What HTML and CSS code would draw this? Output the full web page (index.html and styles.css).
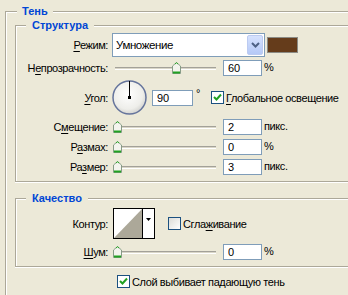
FILE: index.html
```html
<!DOCTYPE html>
<html lang="ru">

<head>
    <meta charset="UTF-8">
    <title>Тень</title>
    <link rel="stylesheet" href="styles.css">
</head>

<body>
    <fieldset class="group outer">
        <legend>Тень</legend>

        <fieldset class="group">
            <legend>Структура</legend>

            <div class="row row-mode">
                <label class="lbl"><u>Р</u>ежим:</label>
                <div class="select">
                    <span class="select-text">Умножение</span>
                    <span class="select-btn">
                        <svg width="9" height="6" viewBox="0 0 9 6">
                            <path d="M1 1 L4.5 4.5 L8 1" fill="none" stroke="#4d6185" stroke-width="2"/>
                        </svg>
                    </span>
                </div>
                <span class="swatch"></span>
            </div>

            <div class="row">
                <label class="lbl">Н<u>е</u>прозрачность:</label>
                <div class="slider">
                    <span class="track"></span>
                    <span class="thumb thumb-60"></span>
                </div>
                <input class="num" type="text" value="60">
                <span class="unit">%</span>
            </div>

            <div class="row row-angle">
                <label class="lbl"><u>У</u>гол:</label>
                <svg class="dial" width="35" height="35" viewBox="0 0 35 35">
                    <defs>
                        <radialGradient id="dialFill" cx="45%" cy="40%" r="60%">
                            <stop offset="0" stop-color="#ffffff"/>
                            <stop offset="0.75" stop-color="#eeeeea"/>
                            <stop offset="1" stop-color="#d4d4d0"/>
                        </radialGradient>
                    </defs>
                    <circle cx="17.5" cy="17.5" r="16.5" fill="url(#dialFill)" stroke="#65749c" stroke-width="1.5"/>
                    <line x1="17.5" y1="17.5" x2="17.5" y2="1" stroke="#000" stroke-width="1"/>
                    <rect x="16" y="16" width="3" height="3" fill="#000"/>
                </svg>
                <input class="num num-angle" type="text" value="90">
                <span class="deg">°</span>
                <span class="check checked"></span>
                <span class="check-text"><u>Г</u>лобальное освещение</span>
            </div>

            <div class="row">
                <label class="lbl">С<u>м</u>ещение:</label>
                <div class="slider">
                    <span class="track"></span>
                    <span class="thumb"></span>
                </div>
                <input class="num" type="text" value="2">
                <span class="unit">пикс.</span>
            </div>

            <div class="row">
                <label class="lbl">Р<u>а</u>змах:</label>
                <div class="slider">
                    <span class="track"></span>
                    <span class="thumb"></span>
                </div>
                <input class="num" type="text" value="0">
                <span class="unit">%</span>
            </div>

            <div class="row">
                <label class="lbl">Ра<u>з</u>мер:</label>
                <div class="slider">
                    <span class="track"></span>
                    <span class="thumb"></span>
                </div>
                <input class="num" type="text" value="3">
                <span class="unit">пикс.</span>
            </div>
        </fieldset>

        <fieldset class="group quality">
            <legend>Качество</legend>

            <div class="row row-contour">
                <label class="lbl">Контур:</label>
                <svg class="contour" width="42" height="31" viewBox="0 0 42 31">
                    <rect x="0.5" y="0.5" width="41" height="30" fill="#fff" stroke="#000"/>
                    <path d="M1 30 L29 1 L29 30 Z" fill="#aca899"/>
                    <line x1="29.5" y1="0" x2="29.5" y2="31" stroke="#000"/>
                    <path d="M33 10 L38 10 L35.5 13 Z" fill="#000"/>
                </svg>
                <span class="check check-smooth"></span>
                <span class="check-text">Сгла<u>ж</u>ивание</span>
            </div>

            <div class="row">
                <label class="lbl"><u>Ш</u>ум:</label>
                <div class="slider">
                    <span class="track"></span>
                    <span class="thumb"></span>
                </div>
                <input class="num" type="text" value="0">
                <span class="unit">%</span>
            </div>
        </fieldset>

        <div class="row row-knockout">
            <span class="check checked"></span>
            <span class="check-text">Слой выбивает падающую тень</span>
        </div>
    </fieldset>
</body>

</html>
```

FILE: styles.css
```css
* {
    box-sizing: border-box;
}

html,
body {
    margin: 0;
    width: 348px;
    height: 295px;
    overflow: hidden;
}

body {
    background: #ece9d8;
    font-family: 'Liberation Sans', Arial, sans-serif;
    font-size: 11px;
    letter-spacing: -0.4px;
    color: #000;
}

u {
    text-decoration: underline;
    text-underline-offset: 2px;
}

/* group boxes: the dialog is cut off on the right */
.group {
    margin: 0;
    padding: 0 0 6px 0;
    border: 1px solid #aca899;
    border-right: none;
    box-shadow: inset 1px 1px 0 #fff, 0 1px 0 #fff;
    min-width: 0;
}

.group legend {
    margin-left: 10px;
    padding: 0 6px;
    font-weight: bold;
    letter-spacing: 0;
    color: #0046d5;
    line-height: 14px;
    background: #ece9d8;
}

.outer {
    margin: 4px 0 0 5px;
    width: 343px;
    height: 291px;
    padding: 0 0 0 9px;
    border-bottom: none;
    box-shadow: inset 1px 1px 0 #fff;
}

.outer > legend {
    margin-left: 2px;
    padding: 0 5px;
}

.quality {
    margin-top: 9px;
}

/* rows */
.row {
    display: flex;
    align-items: center;
    height: 16px;
    margin-top: 4px;
}

.lbl {
    width: 92px;
    text-align: right;
    white-space: nowrap;
    margin-right: 4px;
}

.row-mode {
    height: 24px;
    margin-top: 1px;
}

.row-mode + .row {
    margin-top: 3px;
}

.row-angle {
    height: 35px;
}

.row-contour {
    height: 31px;
    margin-top: 3px;
}

.row-contour + .row {
    margin-top: 5px;
}

.row-knockout {
    height: 13px;
    margin-top: 8px;
    padding-left: 102px;
}

/* mode select */
.select {
    display: flex;
    align-items: center;
    width: 153px;
    height: 24px;
    border: 1px solid #7f9db9;
    background: #fff;
    padding: 1px;
}

.select-text {
    flex: 1;
    padding-left: 2px;
    font-size: 11.5px;
}

.select-btn {
    width: 16px;
    height: 100%;
    display: flex;
    align-items: center;
    justify-content: center;
    background: linear-gradient(#d6e2fe, #b5c9f7);
    border: 1px solid #bccbf1;
    border-radius: 2px;
}

.swatch {
    width: 31px;
    height: 16px;
    margin-left: 2px;
    border: 1px solid #8b8b85;
    background: #653c1b;
}

/* slider */
.slider {
    position: relative;
    width: 108px;
    height: 16px;
}

.track {
    position: absolute;
    left: 3px;
    right: 4px;
    top: 7px;
    height: 3px;
    background: #d9d6c8;
    border-top: 1px solid #a3a199;
    border-bottom: 1px solid #fff;
}

.thumb {
    position: absolute;
    top: 2px;
    left: 1px;
    width: 9px;
    height: 12px;
    background: url("data:image/svg+xml;utf8,<svg xmlns='http://www.w3.org/2000/svg' width='9' height='12'><path d='M0.5 4 L4.5 0.5 L8.5 4 V11.5 H0.5 Z' fill='%23f4f4ee' stroke='%23879c87'/><path d='M3 2 L4.5 0.8 L6 2' fill='none' stroke='%2326a626'/><rect x='1' y='9.5' width='7' height='2' fill='%2321a121'/></svg>") no-repeat;
}

.thumb-60 {
    left: 60px;
}

/* numeric fields */
.num {
    width: 39px;
    height: 16px;
    margin: 0 0 0 3px;
    padding: 0 0 0 4px;
    border: 1px solid #7f9db9;
    background: #fff;
    font-family: inherit;
    font-size: 11px;
    color: #000;
    outline: none;
}

.unit {
    margin-left: 2px;
    align-self: flex-start;
    line-height: 14px;
}

.dial {
    display: block;
}

.num-angle {
    width: 41px;
    margin-left: 5px;
}

.deg {
    align-self: flex-start;
    margin: 7px 0 0 3px;
    line-height: 12px;
}

/* checkboxes */
.check {
    width: 13px;
    height: 13px;
    border: 1px solid #1c5180;
    background: linear-gradient(135deg, #dcdcd7, #fff);
    flex: none;
}

.checked {
    background: #fff url("data:image/svg+xml;utf8,<svg xmlns='http://www.w3.org/2000/svg' width='11' height='11'><path d='M2 5 L4.5 7.5 L9 2.5' fill='none' stroke='%2321a121' stroke-width='2'/></svg>") no-repeat center;
}

.row-angle .check {
    margin-left: 11px;
}

.check-smooth {
    margin-left: 13px;
}

.check-text {
    margin-left: 2px;
    white-space: nowrap;
}

.contour {
    display: block;
    margin-left: 1px;
}
```
